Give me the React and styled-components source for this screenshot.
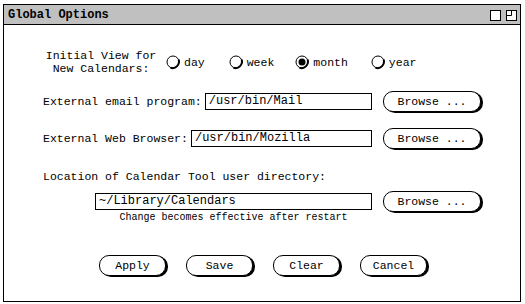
import React from "react";
import styled, { createGlobalStyle } from "styled-components";

const GlobalStyle = createGlobalStyle`
    body {
        margin: 0;
        background: #fff;
        font-family: "Liberation Mono", "DejaVu Sans Mono", monospace;
        color: #000;
    }
`;

const Page = styled.div`
    padding: 4px 0 0 3px;
`;

const Window = styled.div`
    box-sizing: border-box;
    width: 518px;
    height: 298px;
    border: 1px solid #000;
    display: flex;
    flex-direction: column;
`;

const TitleBar = styled.div`
    box-sizing: border-box;
    height: 20px;
    background: #c0c0c0;
    border-bottom: 1px solid #000;
    display: flex;
    align-items: center;
    justify-content: space-between;
    padding: 0 3px 0 4px;
    font-size: 12px;
    font-weight: 700;
`;

const TitleIcons = styled.div`
    display: flex;
    gap: 5px;
    padding-top: 1px;
`;

const Body = styled.div`
    display: flex;
    flex-direction: column;
    padding-left: 39px;
    font-size: 11.5px;
`;

const RadioRow = styled.div`
    display: flex;
    align-items: center;
    height: 26px;
    margin-top: 24px;
`;

const StackLabel = styled.div`
    width: 116px;
    text-align: center;
    line-height: 13px;
    margin-right: 7px;
`;

const Option = styled.label`
    display: flex;
    align-items: center;
    margin-right: ${(p) => p.gap}px;
`;

const OptionText = styled.span`
    margin-left: 3px;
`;

const FieldRow = styled.div`
    display: flex;
    align-items: center;
    width: 438px;
    height: 22px;
    margin-top: ${(p) => p.top}px;
    padding-left: ${(p) => p.indent || 0}px;
    box-sizing: border-box;
`;

const Label = styled.span`
    margin-right: 3px;
    white-space: nowrap;
`;

const Field = styled.div`
    flex: 1;
    position: relative;
`;

const Input = styled.div`
    box-sizing: border-box;
    height: 17px;
    border: 1px solid #000;
    padding: 0 3px;
    font-size: 12px;
    line-height: 15px;
    white-space: nowrap;
`;

const Note = styled.div`
    position: absolute;
    left: 0;
    right: 0;
    top: 19px;
    text-align: center;
    font-size: 10px;
`;

const Pill = styled.button`
    box-sizing: border-box;
    width: ${(p) => p.w}px;
    height: 21px;
    margin-left: ${(p) => p.ml || 0}px;
    border: 1px solid #000;
    border-radius: 10px;
    background: #fff;
    box-shadow: 2px 1px 0 0 #000;
    font-family: "Liberation Mono", monospace;
    font-size: 11.5px;
    color: #000;
    padding: 0;
    flex: none;
`;

const SectionLabel = styled.div`
    margin-top: 20px;
    height: 16px;
    line-height: 16px;
`;

const ButtonBar = styled.div`
    display: flex;
    gap: 20px;
    margin-top: 43px;
    padding-left: 56px;
`;

const Radio = ({ on }) => (
    <svg width="15" height="15" viewBox="0 0 15 15">
        <circle cx="7" cy="7" r="6" fill="#fff" stroke="#000" strokeWidth="1" />
        <path d="M12.6 4.5 A6.5 6.5 0 0 1 4.5 12.8" fill="none" stroke="#000" strokeWidth="2" />
        {on && <circle cx="7" cy="7" r="3.5" fill="#000" />}
    </svg>
);

const BoxIcon = () => (
    <svg width="11" height="11" viewBox="0 0 11 11">
        <rect x="0.5" y="0.5" width="10" height="10" fill="#fff" stroke="#000" />
    </svg>
);

const RestoreIcon = () => (
    <svg width="11" height="11" viewBox="0 0 11 11">
        <rect x="0.5" y="0.5" width="10" height="10" fill="#fff" stroke="#000" />
        <path d="M5.5 0.5 V5.5 H0.5" fill="none" stroke="#000" />
    </svg>
);

const views = [
    { name: "day", gap: 24 },
    { name: "week", gap: 21 },
    { name: "month", gap: 23 },
    { name: "year", gap: 0 },
];

export default function App() {
    return (
        <Page>
            <GlobalStyle />
            <Window>
                <TitleBar>
                    <span>Global Options</span>
                    <TitleIcons>
                        <BoxIcon />
                        <RestoreIcon />
                    </TitleIcons>
                </TitleBar>
                <Body>
                    <RadioRow>
                        <StackLabel>
                            Initial View for
                            <br />
                            New Calendars:
                        </StackLabel>
                        {views.map((v) => (
                            <Option key={v.name} gap={v.gap}>
                                <Radio on={v.name === "month"} />
                                <OptionText>{v.name}</OptionText>
                            </Option>
                        ))}
                    </RadioRow>

                    <FieldRow top={15}>
                        <Label>External email program:</Label>
                        <Field>
                            <Input>/usr/bin/Mail</Input>
                        </Field>
                        <Pill w={98} ml={11}>Browse ...</Pill>
                    </FieldRow>

                    <FieldRow top={15}>
                        <Label>External Web Browser:</Label>
                        <Field>
                            <Input>/usr/bin/Mozilla</Input>
                        </Field>
                        <Pill w={98} ml={11}>Browse ...</Pill>
                    </FieldRow>

                    <SectionLabel>Location of Calendar Tool user directory:</SectionLabel>

                    <FieldRow top={5} indent={52}>
                        <Field>
                            <Input>~/Library/Calendars</Input>
                            <Note>Change becomes effective after restart</Note>
                        </Field>
                        <Pill w={98} ml={11}>Browse ...</Pill>
                    </FieldRow>

                    <ButtonBar>
                        <Pill w={67}>Apply</Pill>
                        <Pill w={67}>Save</Pill>
                        <Pill w={67}>Clear</Pill>
                        <Pill w={67}>Cancel</Pill>
                    </ButtonBar>
                </Body>
            </Window>
        </Page>
    );
}
